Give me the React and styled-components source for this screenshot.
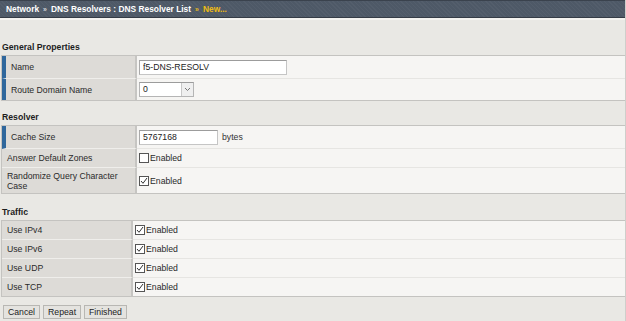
import React from 'react'
import styled, { createGlobalStyle } from 'styled-components'

const GlobalStyle = createGlobalStyle`
  html, body {
    margin: 0;
    padding: 0;
    background: #e9e8e4;
  }
  body {
    font-family: "Liberation Sans", Arial, sans-serif;
    font-size: 8.7px;
    color: #222;
  }
`

const Page = styled.div`
  width: 626px;
  height: 321px;
  box-sizing: border-box;
  background: #e9e8e4;
  border-right: 1px solid #cfcecb;
  overflow: hidden;
`

const Header = styled.div`
  height: 16px;
  display: flex;
  align-items: center;
  gap: 4px;
  padding-left: 6px;
  background-color: #4e5967;
  background-image: repeating-linear-gradient(45deg, rgba(255,255,255,0.03) 0 1px, transparent 1px 3px);
  border-top: 1px solid #3a424d;
  border-bottom: 1px solid #353c46;
  color: #fff;
  font-weight: bold;
  font-size: 8.4px;
`

const Sep = styled.span`
  color: ${p => (p.$gold ? '#e3b51f' : '#cfd3d8')};
  font-size: 7px;
`

const Current = styled.span`
  color: #eebc14;
`

const HeaderShadow = styled.div`
  height: 2px;
  background: #f4f3f0;
`

const Section = styled.div`
  padding-top: ${p => p.$top || 9}px;
`

const Heading = styled.div`
  height: 15px;
  line-height: 15px;
  padding-left: 2px;
  font-weight: bold;
  color: #1d1d1d;
`

const Table = styled.div`
  display: grid;
  grid-template-columns: ${p => p.$labelWidth}px 1fr;
  margin-left: 1px;
  border: 1px solid #c4c3c0;
  border-right: none;
`

const Label = styled.div`
  background: #dddbd7;
  border-left: ${p => (p.$required ? '4px solid #2f679c' : '0')};
  border-right: 2px solid #c6c5c2;
  border-bottom: ${p => (p.$last ? '0' : '1px solid #efeeeb')};
  padding: 0 4px 0 5px;
  display: flex;
  align-items: center;
  min-height: ${p => p.$h}px;
  line-height: 10px;
  color: #2a2a2a;
`

const Value = styled.div`
  background: #f6f5f3;
  border-bottom: ${p => (p.$last ? '0' : '1px solid #e6e5e2')};
  padding-left: ${p => p.$pad || 2}px;
  display: flex;
  align-items: center;
  gap: 3px;
  min-height: ${p => p.$h}px;
`

const TextInput = styled.input`
  box-sizing: border-box;
  width: ${p => p.$w}px;
  height: 15px;
  padding: 0 3px;
  border: 1px solid #c5c5c5;
  border-top-color: #9c9c9c;
  border-left-color: #aaaaaa;
  background: #fff;
  font-family: inherit;
  font-size: 8.7px;
  color: #222;
  outline: none;
`

const SelectBox = styled.div`
  box-sizing: border-box;
  width: 55px;
  height: 15px;
  display: flex;
  border: 1px solid #b5b5b5;
  border-top-color: #9c9c9c;
  background: #fff;
`

const SelectText = styled.span`
  flex: 1;
  padding-left: 3px;
  line-height: 13px;
`

const SelectButton = styled.span`
  width: 11px;
  border-left: 1px solid #c8c8c8;
  background: #efefef;
  display: flex;
  align-items: center;
  justify-content: center;
`

const Unit = styled.span`
  margin-left: 1px;
  color: #333;
`

const Check = styled.label`
  display: flex;
  align-items: center;
  gap: 1px;
  color: #2a2a2a;
`

const Box = styled.span`
  box-sizing: border-box;
  width: 10px;
  height: 10px;
  border: 1px solid #555;
  background: #fff;
  display: flex;
  align-items: center;
  justify-content: center;
`

const Buttons = styled.div`
  display: flex;
  gap: 3px;
  padding: 8px 0 0 3px;
`

const Button = styled.button`
  box-sizing: border-box;
  height: 14px;
  padding: 0 4px;
  border: 1px solid #b8b7b3;
  background: #e4e3df;
  font-family: inherit;
  font-size: 8.7px;
  color: #222;
  line-height: 12px;
`

const Checkbox = ({ checked }) => (
  <Check>
    <Box>
      {checked && (
        <svg width="8" height="8" viewBox="0 0 8 8">
          <path d="M1 4 L3 6.3 L7 1" fill="none" stroke="#333" strokeWidth="1" />
        </svg>
      )}
    </Box>
    Enabled
  </Check>
)

const traffic = ['Use IPv4', 'Use IPv6', 'Use UDP', 'Use TCP']

export default function App() {
  return (
    <Page>
      <GlobalStyle />
      <Header>
        <span>Network</span>
        <Sep>»</Sep>
        <span>DNS Resolvers : DNS Resolver List</span>
        <Sep $gold>»</Sep>
        <Current>New...</Current>
      </Header>
      <HeaderShadow />

      <Section $top={20}>
        <Heading>General Properties</Heading>
        <Table $labelWidth={135}>
          <Label $required $h={22}>Name</Label>
          <Value $h={22}>
            <TextInput $w={148} defaultValue="f5-DNS-RESOLV" />
          </Value>
          <Label $required $last $h={21}>Route Domain Name</Label>
          <Value $last $h={21}>
            <SelectBox>
              <SelectText>0</SelectText>
              <SelectButton>
                <svg width="7" height="5" viewBox="0 0 7 5">
                  <path d="M1 1 L3.5 3.5 L6 1" fill="none" stroke="#777" strokeWidth="1" />
                </svg>
              </SelectButton>
            </SelectBox>
          </Value>
        </Table>
      </Section>

      <Section>
        <Heading>Resolver</Heading>
        <Table $labelWidth={135}>
          <Label $required $h={22}>Cache Size</Label>
          <Value $h={22}>
            <TextInput $w={79} defaultValue="5767168" />
            <Unit>bytes</Unit>
          </Value>
          <Label $h={18}>Answer Default Zones</Label>
          <Value $h={18}>
            <Checkbox />
          </Value>
          <Label $last $h={25}>Randomize Query Character Case</Label>
          <Value $last $h={25}>
            <Checkbox checked />
          </Value>
        </Table>
      </Section>

      <Section $top={11}>
        <Heading>Traffic</Heading>
        <Table $labelWidth={131}>
          {traffic.map((t, i) => (
            <React.Fragment key={t}>
              <Label $last={i === traffic.length - 1} $h={18}>{t}</Label>
              <Value $last={i === traffic.length - 1} $h={18}>
                <Checkbox checked />
              </Value>
            </React.Fragment>
          ))}
        </Table>
      </Section>

      <Buttons>
        <Button>Cancel</Button>
        <Button>Repeat</Button>
        <Button>Finished</Button>
      </Buttons>
    </Page>
  )
}
